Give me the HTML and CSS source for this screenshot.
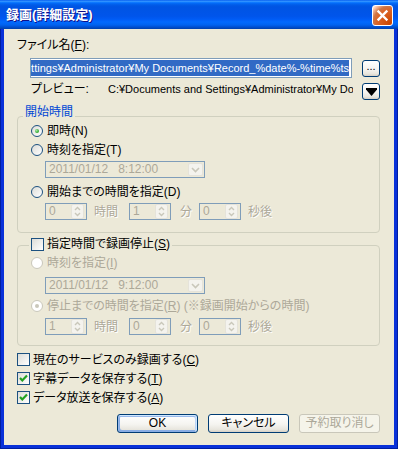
FILE: index.html
```html
<!DOCTYPE html>
<html lang="ja">
<head>
  <meta charset="UTF-8" />
  <title>録画(詳細設定)</title>
  <link rel="stylesheet" href="styles.css">
</head>
<body>
  <div class="window">
    <div class="titlebar">
      <span class="title">録画(詳細設定)</span>
      <button class="close-btn" type="button">
        <svg width="19" height="19" viewBox="0 0 19 19"><path d="M5.5 5.5 L13.5 13.5 M13.5 5.5 L5.5 13.5" stroke="#fff" stroke-width="2.4" stroke-linecap="square"/></svg>
      </button>
    </div>

    <div class="dialog">
      <div class="file-label">ファイル名(<u>F</u>):</div>
      <div class="file-row">
        <div class="textbox"><span class="selected">C:¥Documents and Settings¥Administrator¥My Documents¥Record_%date%-%time%ts</span></div>
        <button class="btn small-btn dots" type="button">...</button>
      </div>
      <div class="preview-row">
        <span class="preview-label">プレビュー:</span>
        <span class="preview-value">C:¥Documents and Settings¥Administrator¥My Documents¥Record_110112-081200.ts</span>
        <button class="btn small-btn" type="button">
          <svg width="11" height="8" viewBox="0 0 11 8"><path d="M0 0 H11 V1.5 L5.5 8 L0 1.5 Z" fill="#000"/></svg>
        </button>
      </div>

      <!-- 開始時間 -->
      <div class="group start-group">
        <span class="group-title">開始時間</span>
        <div class="option"><span class="radio checked"></span>即時(N)</div>
        <div class="option gap-5"><span class="radio"></span>時刻を指定(T)</div>
        <div class="combo indent mt-4">
          <span>2011/01/12</span><span class="combo-time">8:12:00</span>
          <span class="combo-btn"><svg width="9" height="6" viewBox="0 0 9 6"><path d="M1 1 L4.5 4.5 L8 1" fill="none" stroke="#C9C7BA" stroke-width="1.6"/></svg></span>
        </div>
        <div class="option mt-7"><span class="radio"></span>開始までの時間を指定(D)</div>
        <div class="spin-row indent mt-4">
          <div class="spin"><span>0</span><span class="spin-btns"><svg width="13" height="15" viewBox="0 0 13 15"><path d="M4 6 L6.5 3.5 L9 6 M4 9 L6.5 11.5 L9 9" fill="none" stroke="#C9C7BA" stroke-width="1.4"/></svg></span></div>
          <span class="unit unit-hour">時間</span>
          <div class="spin"><span>1</span><span class="spin-btns"><svg width="13" height="15" viewBox="0 0 13 15"><path d="M4 6 L6.5 3.5 L9 6 M4 9 L6.5 11.5 L9 9" fill="none" stroke="#C9C7BA" stroke-width="1.4"/></svg></span></div>
          <span class="unit unit-min">分</span>
          <div class="spin"><span>0</span><span class="spin-btns"><svg width="13" height="15" viewBox="0 0 13 15"><path d="M4 6 L6.5 3.5 L9 6 M4 9 L6.5 11.5 L9 9" fill="none" stroke="#C9C7BA" stroke-width="1.4"/></svg></span></div>
          <span class="unit unit-sec">秒後</span>
        </div>
      </div>

      <!-- 指定時間で録画停止 -->
      <div class="group stop-group">
        <span class="group-title check-title"><span class="check"></span>指定時間で録画停止(<u>S</u>)</span>
        <div class="option off"><span class="radio disabled"></span>時刻を指定(<u>I</u>)</div>
        <div class="combo indent mt-7">
          <span>2011/01/12</span><span class="combo-time">9:12:00</span>
          <span class="combo-btn"><svg width="9" height="6" viewBox="0 0 9 6"><path d="M1 1 L4.5 4.5 L8 1" fill="none" stroke="#C9C7BA" stroke-width="1.6"/></svg></span>
        </div>
        <div class="option off gap-5"><span class="radio disabled checked"></span>停止までの時間を指定(<u>R</u>) (※録画開始からの時間)</div>
        <div class="spin-row indent mt-5">
          <div class="spin"><span>1</span><span class="spin-btns"><svg width="13" height="15" viewBox="0 0 13 15"><path d="M4 6 L6.5 3.5 L9 6 M4 9 L6.5 11.5 L9 9" fill="none" stroke="#C9C7BA" stroke-width="1.4"/></svg></span></div>
          <span class="unit unit-hour">時間</span>
          <div class="spin"><span>0</span><span class="spin-btns"><svg width="13" height="15" viewBox="0 0 13 15"><path d="M4 6 L6.5 3.5 L9 6 M4 9 L6.5 11.5 L9 9" fill="none" stroke="#C9C7BA" stroke-width="1.4"/></svg></span></div>
          <span class="unit unit-min">分</span>
          <div class="spin"><span>0</span><span class="spin-btns"><svg width="13" height="15" viewBox="0 0 13 15"><path d="M4 6 L6.5 3.5 L9 6 M4 9 L6.5 11.5 L9 9" fill="none" stroke="#C9C7BA" stroke-width="1.4"/></svg></span></div>
          <span class="unit unit-sec">秒後</span>
        </div>
      </div>

      <div class="check-list">
        <div class="check-row"><span class="check"></span>現在のサービスのみ録画する(<u>C</u>)</div>
        <div class="check-row"><span class="check"><svg width="11" height="11" viewBox="0 0 11 11"><path d="M2 5 L4.3 7.5 L9 2.5" fill="none" stroke="#21A121" stroke-width="2.2"/></svg></span>字幕データを保存する(<u>T</u>)</div>
        <div class="check-row"><span class="check"><svg width="11" height="11" viewBox="0 0 11 11"><path d="M2 5 L4.3 7.5 L9 2.5" fill="none" stroke="#21A121" stroke-width="2.2"/></svg></span>データ放送を保存する(<u>A</u>)</div>
      </div>

      <div class="buttons">
        <button class="btn push default" type="button">OK</button>
        <button class="btn push" type="button">キャンセル</button>
        <button class="btn push disabled" type="button">予約取り消し</button>
      </div>
    </div>
  </div>
</body>
</html>
```

FILE: styles.css
```css
html, body {
  margin: 0;
  padding: 0;
  width: 398px;
  height: 449px;
  overflow: hidden;
}

body {
  font-family: "Liberation Sans", "Noto Sans CJK JP", sans-serif;
  font-size: 12px;
  font-feature-settings: "palt";
  color: #000;
}

u {
  text-underline-offset: 1px;
}

.window {
  width: 398px;
  height: 449px;
  display: flex;
  flex-direction: column;
  background: #0831D9;
  box-shadow: inset 1px 0 #001EA0, inset -1px 0 #001EA0, inset 0 -1px #001EA0;
}

/* title bar */
.titlebar {
  flex: none;
  height: 29px;
  display: flex;
  align-items: center;
  justify-content: space-between;
  padding: 0 5px 0 6px;
  background: linear-gradient(to bottom,
    #0058EE 0%, #3593FF 4%, #288EFF 6%, #127DFF 8%, #036FFC 10%,
    #0262EE 14%, #0057E5 20%, #0054E3 24%, #0055EB 56%, #005BF5 66%,
    #026AFE 76%, #0062EF 86%, #0052D6 92%, #0040AB 100%);
}

.title {
  color: #fff;
  font-weight: bold;
  font-size: 13px;
  line-height: 16px;
  text-shadow: 1px 1px #0F1089;
}

.close-btn {
  width: 21px;
  height: 21px;
  padding: 0;
  margin-top: 1px;
  border: 1px solid #fff;
  border-radius: 3px;
  display: flex;
  align-items: center;
  justify-content: center;
  background: radial-gradient(circle at 90% 90%, #CC4600 0%, #DC6527 55%, #CD7546 70%, #FFCCB2 90%, #fff 100%);
}

/* body */
.dialog {
  flex: 1;
  margin: 0 4px 4px;
  padding: 9px 14px 0 13px;
  background: #ECE9D8;
}

.file-label {
  height: 14px;
  line-height: 14px;
}

.file-row {
  display: flex;
  align-items: center;
  gap: 10px;
  margin-top: 6px;
  padding-left: 13px;
}

.textbox {
  width: 322px;
  height: 20px;
  box-sizing: border-box;
  border: 1px solid #7F9DB9;
  background: #fff;
  padding: 1px 2px;
  display: flex;
  justify-content: flex-end;
  overflow: hidden;
}

.selected {
  flex: none;
  background: #316AC5;
  color: #fff;
  font-size: 11px;
  line-height: 16px;
  white-space: nowrap;
}

.preview-row {
  display: flex;
  align-items: flex-start;
  height: 17px;
  margin-top: 5px;
  padding-left: 14px;
}

.preview-label {
  width: 77px;
  flex: none;
  line-height: 14px;
  margin-top: -1px;
}

.preview-value {
  width: 245px;
  flex: none;
  overflow: hidden;
  white-space: nowrap;
  font-size: 11px;
  line-height: 14px;
  margin-top: -1px;
}

.preview-row .small-btn {
  margin-left: 9px;
}

/* buttons */
.btn {
  font: inherit;
  color: #000;
  padding: 0;
  border: 1px solid #003C74;
  border-radius: 3px;
  background: linear-gradient(to bottom, #fff 0%, #F5F4F0 55%, #E8E6DE 85%, #D6D0C5 100%);
  display: flex;
  align-items: center;
  justify-content: center;
}

.small-btn {
  width: 18px;
  height: 17px;
  flex: none;
}

.dots {
  font-size: 11px;
  line-height: 11px;
  align-items: flex-end;
  padding-bottom: 4px;
}

.push {
  width: 81px;
  height: 19px;
  line-height: 17px;
}

.default {
  box-shadow: inset -1px 1px #CEE7FF, inset 1px 2px #98B8EA, inset -2px 2px #BCD4F6, inset 1px -1px #89ADE4, inset 2px -2px #89ADE4;
}

.disabled.push {
  border-color: #C9C7BA;
  color: #ACA899;
  background: #F5F4EA;
}

/* group boxes */
.group {
  position: relative;
  border: 1px solid #D0D0BF;
  border-radius: 4px;
  box-sizing: border-box;
  padding-left: 13px;
}

.start-group {
  height: 117px;
  margin-top: 16px;
  padding-top: 7px;
}

.stop-group {
  height: 101px;
  margin-top: 12px;
  padding-top: 10px;
}

.group-title {
  position: absolute;
  left: 5px;
  top: -12px;
  padding: 0 2px;
  line-height: 14px;
  background: #ECE9D8;
  color: #0046D5;
}

.check-title {
  left: 11px;
  top: -9px;
  color: #000;
  display: flex;
  align-items: center;
}

.option {
  display: flex;
  align-items: center;
  height: 14px;
  line-height: 14px;
  white-space: nowrap;
}

.option.off {
  color: #ACA899;
}

.indent { margin-left: 14px; }
.gap-5 { margin-top: 5px; }
.mt-4 { margin-top: 4px; }
.mt-5 { margin-top: 5px; }
.mt-7 { margin-top: 7px; }

.radio {
  position: relative;
  flex: none;
  width: 12px;
  height: 12px;
  box-sizing: border-box;
  margin-right: 4px;
  border: 1px solid #1C5180;
  border-radius: 50%;
  background: linear-gradient(135deg, #DCDCD7, #fff);
}

.radio.checked::after {
  content: "";
  position: absolute;
  left: 3px;
  top: 3px;
  width: 4px;
  height: 4px;
  border-radius: 50%;
  background: radial-gradient(circle at 35% 35%, #A4E9A4, #21A121 75%);
}

.radio.disabled {
  border-color: #CAC8BB;
  background: #fff;
}

.radio.disabled.checked::after {
  background: #CAC8BB;
}

.check {
  flex: none;
  width: 13px;
  height: 13px;
  box-sizing: border-box;
  margin-right: 3px;
  border: 1px solid #1C5180;
  background: linear-gradient(135deg, #DCDCD7, #fff);
  display: flex;
  align-items: center;
  justify-content: center;
}

/* combo + spin */
.combo {
  width: 160px;
  height: 17px;
  box-sizing: border-box;
  border: 1px solid #7F9DB9;
  background: #ECE9D8;
  color: #ACA899;
  display: flex;
  align-items: center;
  padding-left: 3px;
  line-height: 15px;
}

.combo-time {
  margin-left: 10px;
}

.combo-btn {
  width: 15px;
  height: 13px;
  box-sizing: border-box;
  margin-left: auto;
  margin-right: 1px;
  border: 1px solid #E5E3DA;
  border-radius: 2px;
  background: #F4F3EE;
  display: flex;
  align-items: center;
  justify-content: center;
}

.spin-row {
  display: flex;
  align-items: center;
  height: 17px;
}

.spin {
  width: 42px;
  height: 17px;
  box-sizing: border-box;
  border: 1px solid #7F9DB9;
  background: #ECE9D8;
  color: #ACA899;
  display: flex;
  align-items: center;
  padding-left: 3px;
  line-height: 15px;
}

.spin-btns {
  margin-left: auto;
  margin-right: 2px;
  width: 13px;
  height: 15px;
  box-sizing: border-box;
  border: 1px solid #E5E3DA;
  border-radius: 2px;
  background: #F4F3EE;
  display: flex;
}

.spin-btns svg {
  margin: -1px;
}

.unit {
  color: #ACA899;
  text-shadow: 1px 1px 0 #fff;
  line-height: 14px;
}

.unit-hour { width: 35px; margin-left: 7px; }
.unit-min { width: 19px; margin-left: 9px; }
.unit-sec { margin-left: 7px; }

/* bottom checkboxes */
.check-list {
  display: flex;
  flex-direction: column;
  gap: 6px;
  margin-top: 7px;
}

.check-row {
  display: flex;
  align-items: center;
  height: 13px;
  line-height: 14px;
}

.buttons {
  display: flex;
  justify-content: flex-end;
  gap: 10px;
  margin-top: 10px;
}
```
